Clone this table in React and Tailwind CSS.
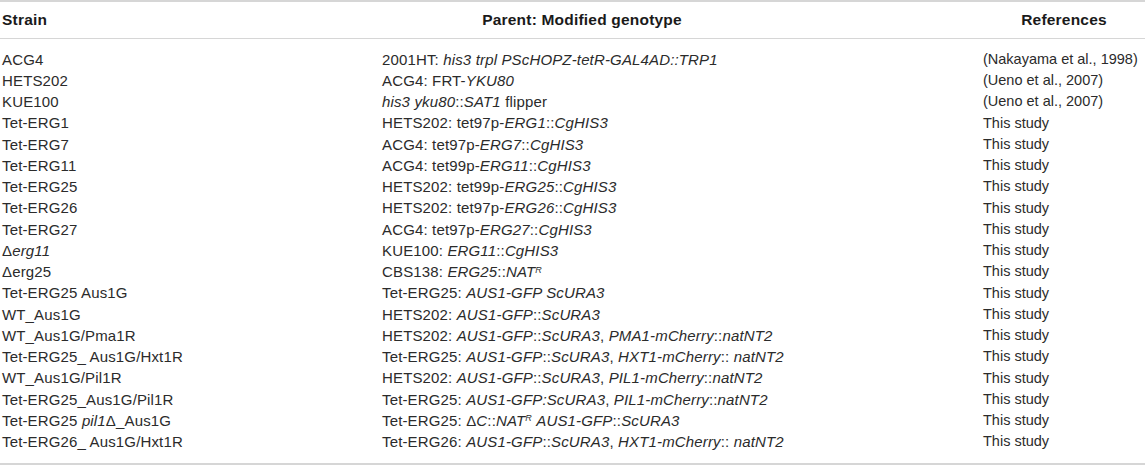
import React from "react";

const I = ({ children }) => <i>{children}</i>;
const R = () => <sup className="text-[9px]">R</sup>;

const rows = [
  ["ACG4", <>2001HT: <I>his3 trpl PScHOPZ-tetR-GAL4AD::TRP1</I></>, "(Nakayama et al., 1998)"],
  ["HETS202", <>ACG4: FRT-<I>YKU80</I></>, "(Ueno et al., 2007)"],
  ["KUE100", <><I>his3 yku80</I>::<I>SAT1</I> flipper</>, "(Ueno et al., 2007)"],
  ["Tet-ERG1", <>HETS202: tet97p-<I>ERG1</I>::<I>CgHIS3</I></>, "This study"],
  ["Tet-ERG7", <>ACG4: tet97p-<I>ERG7</I>::<I>CgHIS3</I></>, "This study"],
  ["Tet-ERG11", <>ACG4: tet99p-<I>ERG11</I>::<I>CgHIS3</I></>, "This study"],
  ["Tet-ERG25", <>HETS202: tet99p-<I>ERG25</I>::<I>CgHIS3</I></>, "This study"],
  ["Tet-ERG26", <>HETS202: tet97p-<I>ERG26</I>::<I>CgHIS3</I></>, "This study"],
  ["Tet-ERG27", <>ACG4: tet97p-<I>ERG27</I>::<I>CgHIS3</I></>, "This study"],
  [<>Δ<I>erg11</I></>, <>KUE100: <I>ERG11</I>::<I>CgHIS3</I></>, "This study"],
  ["Δerg25", <>CBS138: <I>ERG25</I>::<I>NAT<R /></I></>, "This study"],
  ["Tet-ERG25 Aus1G", <>Tet-ERG25: <I>AUS1-GFP ScURA3</I></>, "This study"],
  ["WT_Aus1G", <>HETS202: <I>AUS1-GFP</I>::<I>ScURA3</I></>, "This study"],
  ["WT_Aus1G/Pma1R", <>HETS202: <I>AUS1-GFP</I>::<I>ScURA3</I>, <I>PMA1-mCherry</I>::<I>natNT2</I></>, "This study"],
  ["Tet-ERG25_ Aus1G/Hxt1R", <>Tet-ERG25: <I>AUS1-GFP</I>::<I>ScURA3</I>, <I>HXT1-mCherry</I>:: <I>natNT2</I></>, "This study"],
  ["WT_Aus1G/Pil1R", <>HETS202: <I>AUS1-GFP</I>::<I>ScURA3</I>, <I>PIL1-mCherry</I>::<I>natNT2</I></>, "This study"],
  ["Tet-ERG25_Aus1G/Pil1R", <>Tet-ERG25: <I>AUS1-GFP:ScURA3</I>, <I>PIL1-mCherry</I>::<I>natNT2</I></>, "This study"],
  [<>Tet-ERG25 <I>pil1</I>Δ_Aus1G</>, <>Tet-ERG25: Δ<I>C</I>::<I>NAT<R /></I> <I>AUS1-GFP</I>::<I>ScURA3</I></>, "This study"],
  ["Tet-ERG26_ Aus1G/Hxt1R", <>Tet-ERG26: <I>AUS1-GFP</I>::<I>ScURA3</I>, <I>HXT1-mCherry</I>:: <I>natNT2</I></>, "This study"],
];

const App = () => {
  return (
    <div
      className="w-[1145px] h-[466px] bg-white text-[#2b2b2b] overflow-hidden"
      style={{ fontFamily: '"Liberation Sans", Arial, sans-serif' }}
    >
      <div className="border-t-2 border-b-2 border-[#d6d6d6]">
        {/* header */}
        <div className="grid grid-cols-[380px_601px_1fr] pl-[2px] h-[37px] items-center text-[15.5px] tracking-[0.2px] font-bold text-[#1a1a1a] border-b border-[#d6d6d6]">
          <div>Strain</div>
          <div className="w-[400px] text-center">Parent: Modified genotype</div>
          <div className="text-center">References</div>
        </div>

        {/* body */}
        <div className="pt-[9.5px] pb-[10.8px]">
          {rows.map((r, i) => (
            <div
              key={i}
              className="grid grid-cols-[380px_601px_1fr] pl-[2px] h-[21.25px] items-center whitespace-nowrap"
            >
              <div className="text-[15px] tracking-[0.15px]">{r[0]}</div>
              <div className="text-[15px] tracking-[0.15px]">{r[1]}</div>
              <div className="text-[14.5px]">{r[2]}</div>
            </div>
          ))}
        </div>
      </div>
    </div>
  );
};

export default App;
